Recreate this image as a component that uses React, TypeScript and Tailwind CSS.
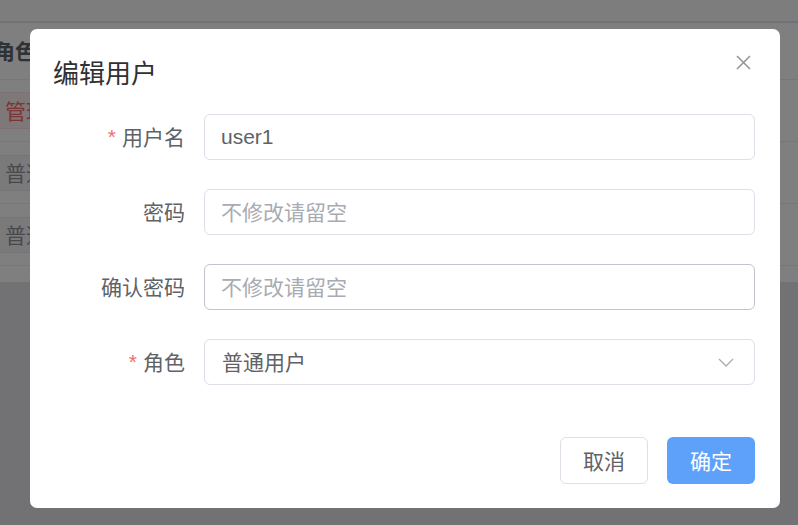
import React from "react";

const CJK = '"Noto Sans CJK SC", "Noto Sans", sans-serif';
const LAT = '"Liberation Sans", "Noto Sans CJK SC", sans-serif';

function Row({ label, required, children }: { label: string; required?: boolean; children: React.ReactNode }) {
  return (
    <div className="flex items-center h-[46px]">
      <div className="w-[155px] flex justify-end items-center pr-0 text-[21px] text-[#606266]" style={{ fontFamily: CJK }}>
        {required && <span className="text-[#f56c6c] mr-[6px] text-[21px]" style={{ fontFamily: LAT }}>*</span>}
        <span>{label}</span>
      </div>
      <div className="ml-[19px] flex-1">{children}</div>
    </div>
  );
}

export default function App() {
  return (
    <div className="relative w-[798px] h-[525px] overflow-hidden bg-[#e4e4e8]" style={{ fontFamily: CJK }}>
      {/* background page */}
      <div className="flex flex-col">
        <div className="h-[23px] bg-[#fafafa] border-b-[2px] border-[#e2e2ee]" />
        <div className="bg-[#fefefe] pb-[16px]">
          <div className="h-[57px] flex items-center border-b border-[#ebeef5]">
            <span className="ml-[-6px] text-[21px] font-bold text-[#606266]">角色</span>
          </div>
          {[
            { t: "管理员", red: true },
            { t: "普通用户", red: false },
            { t: "普通用户", red: false },
          ].map((r, i) => (
            <div key={i} className="h-[62px] flex items-center border-b border-[#ebeef5]">
              <span
                className={
                  r.red
                    ? "ml-[-10px] h-[37px] px-[14px] flex items-center rounded-[6px] border border-[#fde2e2] bg-[#fef0f0] text-[#f56c6c] text-[21px]"
                    : "ml-[-10px] h-[36px] px-[14px] flex items-center rounded-[6px] border border-[#e9e9eb] bg-[#f4f4f5] text-[#909399] text-[21px]"
                }
              >
                {r.t}
              </span>
            </div>
          ))}
        </div>
      </div>

      {/* overlay */}
      <div className="absolute inset-0 bg-black/50 pl-[30px] pt-[29px]">
        <div className="w-[750px] h-[479px] bg-white rounded-[7px] flex flex-col">
          <div className="flex items-start justify-between pl-[23px] pr-[29px] pt-[24px]">
            <div className="text-[26px] leading-[38px] text-[#303133]" style={{ fontFamily: CJK }}>编辑用户</div>
            <svg width="15" height="15" viewBox="0 0 15 15" className="mt-[2px]">
              <path d="M1 1 L14 14 M14 1 L1 14" stroke="#909399" strokeWidth="1.5" fill="none" />
            </svg>
          </div>

          <div className="flex flex-col gap-[29px] mt-[23px] pr-[25px]">
            <Row label="用户名" required>
              <div className="h-[46px] rounded-[6px] border border-[#dcdfe6] flex items-center px-[16px] text-[21px] text-[#606266]" style={{ fontFamily: LAT }}>
                user1
              </div>
            </Row>
            <Row label="密码">
              <div className="h-[46px] rounded-[6px] border border-[#dcdfe6] flex items-center px-[16px] text-[21px] text-[#a8abb2]" style={{ fontFamily: CJK }}>
                不修改请留空
              </div>
            </Row>
            <Row label="确认密码">
              <div className="h-[46px] rounded-[6px] border border-[#c0c4cc] flex items-center px-[16px] text-[21px] text-[#a8abb2]" style={{ fontFamily: CJK }}>
                不修改请留空
              </div>
            </Row>
            <Row label="角色" required>
              <div className="h-[46px] rounded-[6px] border border-[#dcdfe6] flex items-center justify-between pl-[17px] pr-[20px] text-[21px] text-[#606266]" style={{ fontFamily: CJK }}>
                <span>普通用户</span>
                <svg width="16" height="9" viewBox="0 0 16 9">
                  <path d="M1 1 L8 8 L15 1" stroke="#a8abb2" strokeWidth="1.3" fill="none" />
                </svg>
              </div>
            </Row>
          </div>

          <div className="mt-auto flex justify-end gap-[19px] pr-[25px] pb-[24px]">
            <button className="w-[88px] h-[47px] rounded-[6px] border border-[#dcdfe6] bg-white text-[21px] text-[#606266]" style={{ fontFamily: CJK }}>
              取消
            </button>
            <button className="w-[88px] h-[47px] rounded-[6px] bg-[#5ea1fa] text-[21px] text-white" style={{ fontFamily: CJK }}>
              确定
            </button>
          </div>
        </div>
      </div>
    </div>
  );
}
